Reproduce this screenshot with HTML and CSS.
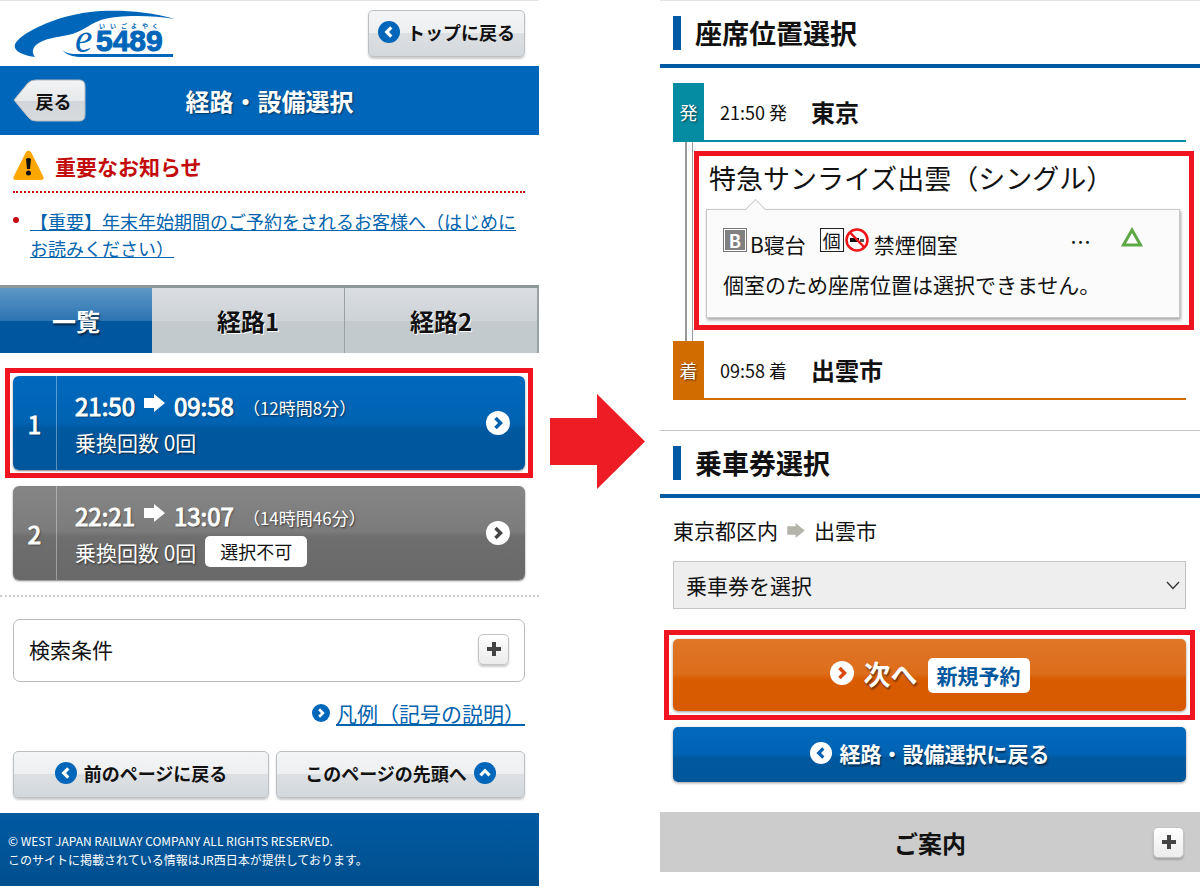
FILE: index.html
```html
<!DOCTYPE html>
<html lang="ja">
<head>
  <meta charset="UTF-8" />
  <meta name="viewport" content="width=device-width, initial-scale=1.0" />
  <title>e5489 経路・設備選択</title>
  <link rel="stylesheet" href="styles.css">
</head>
<body>
  <!-- shared icons -->
  <svg class="sprite" aria-hidden="true">
    <symbol id="circle-right" viewBox="0 0 24 24">
      <circle cx="12" cy="12" r="12" fill="currentColor" />
      <path class="chevron" d="M9.500 7l5 5-5 5" />
    </symbol>
    <symbol id="circle-left" viewBox="0 0 24 24">
      <circle cx="12" cy="12" r="12" fill="currentColor" />
      <path class="chevron" d="M14.500 7l-5 5 5 5" />
    </symbol>
    <symbol id="circle-up" viewBox="0 0 24 24">
      <circle cx="12" cy="12" r="12" fill="currentColor" />
      <path class="chevron" d="M7 14.500l5-5 5 5" />
    </symbol>
    <symbol id="arrow" viewBox="0 0 21 18">
      <path d="M0 4h10V0l11 9-11 9v-4H0z" fill="currentColor" />
    </symbol>
    <symbol id="plus" viewBox="0 0 14 14">
      <path d="M5 0h4v5h5v4H9v5H5V9H0V5h5z" fill="currentColor" />
    </symbol>
  </svg>

  <main class="steps">
    <section class="screen">
      <header class="site-header">
        <a href="#" class="logo" aria-label="e5489">
          <svg width="164" height="50" viewBox="12 6 164 50">
            <path d="M174 16C150 9 124 7 100 8 66 10 38 22 23 32 15 38 13 41 14 45 16 50 26 53 34 54 31 50 31 46 35 42 43 35 58 34 67 32 82 29 86 22 100 17 116 12 150 12 174 16z" fill="#0066b9" />
            <path d="M61 47C66 51 71 51 77 51H172V54H82C73 54 67 53 61 47z" fill="#0066b9" />
            <text class="logo-ruby" x="98 109 120 130 141 151" y="25">いいごよやく</text>
            <text class="logo-e" x="74" y="49">e</text>
            <text class="logo-num" x="95" y="48">5489</text>
          </svg>
        </a>
        <button type="button" class="btn btn-light btn-top"><svg class="icon-md" aria-hidden="true"><use href="#circle-left" /></svg>トップに戻る</button>
      </header>

      <div class="title-bar">
        <button type="button" class="back-tag">
          <svg width="73" height="43" viewBox="0 0 73 43" aria-hidden="true">
            <defs>
              <linearGradient id="tagFill" x1="0" y1="0" x2="0" y2="1">
                <stop offset="0" stop-color="#f3f4f5" />
                <stop offset="0.5" stop-color="#e6e8ea" />
                <stop offset="0.5" stop-color="#d2d6da" />
                <stop offset="1" stop-color="#d8dadd" />
              </linearGradient>
            </defs>
            <path d="M23 1H66Q72 1 72 7V36Q72 42 66 42H23Q18 42 15 38L1 21 15 4Q18 1 23 1z" fill="url(#tagFill)" stroke="#b5bcc3" />
          </svg>
          <span>戻る</span>
        </button>
        <h1>経路・設備選択</h1>
      </div>

      <div class="notice">
        <h2>
          <svg width="31" height="31" viewBox="0 0 31 31" aria-hidden="true">
            <path d="M13 2Q15.500-1 18 2L30 26Q32 30 28 30H3Q-1 30 1 26z" fill="#fba700" />
            <path d="M13 9Q15.500 7 18 9L17 19H14z" fill="#111" />
            <circle cx="15.500" cy="23" r="2.500" fill="#111" />
          </svg>
          重要なお知らせ
        </h2>
        <ul>
          <li><a href="#">【重要】年末年始期間のご予約をされるお客様へ（はじめにお読みください）</a></li>
        </ul>
      </div>

      <nav class="tabs">
        <button type="button" class="tab tab-list active">一覧</button>
        <button type="button" class="tab">経路1</button>
        <button type="button" class="tab">経路2</button>
      </nav>

      <div class="results">
        <div class="highlight">
          <a href="#" class="route-card">
            <span class="route-no">1</span>
            <span class="route-body">
              <span class="route-line">
                <strong>21:50</strong>
                <svg class="icon-arrow" aria-hidden="true"><use href="#arrow" /></svg>
                <strong>09:58</strong>
                <span class="duration">（12時間8分）</span>
              </span>
              <span class="route-line">乗換回数 0回</span>
            </span>
            <svg class="icon-lg" aria-hidden="true"><use href="#circle-right" /></svg>
          </a>
        </div>
        <a href="#" class="route-card disabled">
          <span class="route-no">2</span>
          <span class="route-body">
            <span class="route-line">
              <strong>22:21</strong>
              <svg class="icon-arrow" aria-hidden="true"><use href="#arrow" /></svg>
              <strong>13:07</strong>
              <span class="duration">（14時間46分）</span>
            </span>
            <span class="route-line">乗換回数 0回 <span class="badge">選択不可</span></span>
          </span>
          <svg class="icon-lg" aria-hidden="true"><use href="#circle-right" /></svg>
        </a>
      </div>

      <div class="tools">
        <div class="conditions">
          <span>検索条件</span>
          <button type="button" class="btn-plus" aria-label="検索条件を開く"><svg class="icon-plus" aria-hidden="true"><use href="#plus" /></svg></button>
        </div>
        <p class="legend">
          <svg class="icon-sm" aria-hidden="true"><use href="#circle-right" /></svg>
          <a href="#">凡例（記号の説明）</a>
        </p>
        <div class="page-buttons">
          <button type="button" class="btn btn-light"><svg class="icon-md" aria-hidden="true"><use href="#circle-left" /></svg>前のページに戻る</button>
          <button type="button" class="btn btn-light">このページの先頭へ<svg class="icon-md" aria-hidden="true"><use href="#circle-up" /></svg></button>
        </div>
      </div>

      <footer class="site-footer">
        <p>© WEST JAPAN RAILWAY COMPANY ALL RIGHTS RESERVED.</p>
        <p>このサイトに掲載されている情報はJR西日本が提供しております。</p>
      </footer>
    </section>

    <div class="next-step">
      <svg width="95" height="95" viewBox="0 0 95 95" aria-hidden="true">
        <path d="M0 24h47V0l48 47.500L47 95V71H0z" fill="#ee1c25" />
      </svg>
    </div>

    <section class="screen">
      <h2 class="section-title">座席位置選択</h2>

      <div class="itinerary">
        <div class="stop depart">
          <span class="stop-tag">発</span>
          <span class="stop-time">21:50 発</span>
          <strong>東京</strong>
        </div>
        <div class="leg">
          <div class="track"></div>
          <div class="train">
            <h3>特急サンライズ出雲（シングル）</h3>
            <div class="balloon">
              <div class="seat-row">
                <span class="mark mark-b">B</span>
                <span class="seat-name">B寝台</span>
                <span class="mark mark-room">個</span>
                <svg class="mark-smoke" viewBox="0 0 24 24" aria-hidden="true">
                  <path d="M5 10h9v4H5z" fill="#111" />
                  <path d="M15 11h4v3h-4z" fill="#555" />
                  <circle cx="12" cy="12" r="10.500" fill="none" stroke="#f01418" stroke-width="2.500" />
                  <path d="M5 4.500l14.500 15" stroke="#f01418" stroke-width="2.500" />
                </svg>
                <span>禁煙個室</span>
                <span class="dots">…</span>
                <svg class="vacancy" viewBox="0 0 22 20" aria-hidden="true">
                  <path d="M11 3l8.500 15H2.500z" fill="none" stroke="#5fa945" stroke-width="3" />
                </svg>
              </div>
              <p>個室のため座席位置は選択できません。</p>
            </div>
          </div>
        </div>
        <div class="stop arrive">
          <span class="stop-tag">着</span>
          <span class="stop-time">09:58 着</span>
          <strong>出雲市</strong>
        </div>
      </div>

      <h2 class="section-title">乗車券選択</h2>

      <form class="ticket">
        <label for="ticket">
          東京都区内
          <svg class="icon-arrow-sm" aria-hidden="true"><use href="#arrow" /></svg>
          出雲市
        </label>
        <div class="select-box">
          <select id="ticket" name="ticket">
            <option>乗車券を選択</option>
          </select>
          <svg width="14" height="9" viewBox="0 0 14 9" aria-hidden="true">
            <path d="M1 1l6 6.500L13 1" fill="none" stroke="#333" stroke-width="1.300" />
          </svg>
        </div>
        <div class="highlight highlight-next">
          <button type="button" class="btn btn-next">
            <svg class="icon-lg" aria-hidden="true"><use href="#circle-right" /></svg>
            次へ
            <span class="badge badge-new">新規予約</span>
          </button>
        </div>
        <button type="button" class="btn btn-return">
          <svg class="icon-md" aria-hidden="true"><use href="#circle-left" /></svg>
          経路・設備選択に戻る
        </button>
      </form>

      <div class="guide">
        <h2>ご案内</h2>
        <button type="button" class="btn-plus" aria-label="ご案内を開く"><svg class="icon-plus" aria-hidden="true"><use href="#plus" /></svg></button>
      </div>
    </section>
  </main>
</body>
</html>
```
FILE: styles.css
```css
:root {
  --blue: #0066b9;
  --blue-dark: #00589f;
  --link: #0063ad;
  --red: #c30d0d;
  --mark-red: #f01420;
  --teal: #058ca3;
  --orange: #d16d00;
  --text: #111;
  --left: 13px;
  --right: 14px;
}

* {
  margin: 0;
  padding: 0;
  box-sizing: border-box;
}

body {
  font-family: "Noto Sans CJK JP", "Noto Sans", sans-serif;
  font-size: 21px;
  color: var(--text);
  background: #fff;
}

button, select {
  font-family: inherit;
  color: inherit;
  cursor: pointer;
}

svg {
  display: block;
  flex: none;
}

.sprite {
  position: absolute;
  width: 0;
  height: 0;
}

.chevron {
  fill: none;
  stroke: var(--chevron, #fff);
  stroke-width: 3.5;
}

.icon-sm {
  width: 18px;
  height: 18px;
  color: var(--blue);
}

.icon-md {
  width: 22px;
  height: 22px;
  color: var(--blue);
}

.icon-lg {
  width: 24px;
  height: 24px;
}

.icon-plus {
  width: 14px;
  height: 14px;
  color: #444;
}

.steps {
  display: grid;
  grid-template-columns: 539fr 121fr 540fr;
  align-items: start;
}

.screen {
  border-top: 1px solid #e4e4e4;
}

.next-step {
  display: flex;
  justify-content: center;
  align-self: center;
  padding: 0 5px 4px 0;
}

.highlight {
  outline: 5px solid var(--mark-red);
  outline-offset: 3px;
}

/* buttons */
.btn {
  display: flex;
  align-items: center;
  justify-content: center;
  border: none;
  border-radius: 5px;
  font-weight: bold;
}

.btn-light {
  gap: 7px;
  height: 47px;
  padding-bottom: 4px;
  border: 1px solid #bcc0c2;
  font-size: 18px;
  background: linear-gradient(#f3f4f5, #edeff0 50%, #dde0e3 50%, #d3d8dc);
  box-shadow: 0 2px 2px rgba(0, 0, 0, 0.2);
}

.btn-plus {
  display: flex;
  align-items: center;
  justify-content: center;
  width: 31px;
  height: 31px;
  border: 1px solid #c4c4c4;
  border-radius: 5px;
  background: linear-gradient(#fff, #ececec);
  box-shadow: 0 2px 2px rgba(0, 0, 0, 0.2);
}

/* header */
.site-header {
  display: flex;
  align-items: center;
  justify-content: space-between;
  height: 65px;
  padding: 0 var(--right) 0 var(--left);
}

.logo-ruby {
  font-size: 6px;
  font-weight: bold;
  fill: var(--blue);
}

.logo-e {
  font: italic 39px "Liberation Serif", serif;
  fill: var(--blue);
}

.logo-num {
  font: bold 30px "Liberation Sans", sans-serif;
  fill: var(--blue);
  stroke: var(--blue);
}

.btn-top {
  width: 157px;
}

.title-bar {
  display: grid;
  grid-template-columns: 1fr auto 1fr;
  align-items: center;
  height: 69px;
  padding: 0 var(--left);
  background: var(--blue);
}

.title-bar h1 {
  font-size: 24px;
  line-height: 36px;
  color: #fff;
  text-shadow: 1px 1px 2px rgba(0, 0, 0, 0.5);
}

.back-tag {
  display: grid;
  justify-self: start;
  align-items: center;
  border: none;
  background: none;
  font-size: 18px;
  font-weight: bold;
}

.back-tag svg,
.back-tag span {
  grid-area: 1 / 1;
}

.back-tag span {
  padding-left: 8px;
}

/* notice */
.notice {
  padding: 15px var(--right) 23px var(--left);
}

.notice h2 {
  display: flex;
  align-items: center;
  gap: 11px;
  height: 43px;
  padding-bottom: 10px;
  border-bottom: 2px dotted var(--red);
  font-size: 21px;
  color: var(--red);
}

.notice ul {
  padding-top: 15px;
  list-style: none;
}

.notice li {
  display: flex;
  gap: 11px;
  font-size: 18px;
  line-height: 27px;
}

.notice li::before {
  content: "";
  flex: none;
  width: 6px;
  height: 6px;
  margin-top: 9px;
  border-radius: 50%;
  background: var(--red);
}

a {
  color: var(--link);
}

/* tabs */
.tabs {
  display: flex;
  height: 68px;
  border-top: 3px solid #8d9699;
  border-right: 2px solid #9aa1a4;
}

.tab {
  flex: 193;
  border: none;
  border-left: 1px solid #9aa1a4;
  font-size: 24px;
  font-weight: bold;
  text-shadow: 1px 1px 0 #fff;
  background: linear-gradient(#dadde2, #ced3d7 50%, #c3cacd 50%, #c3cacd);
}

.tab-list {
  flex: 153;
}

.tab.active {
  border-left: none;
  color: #fff;
  text-shadow: 1px 2px 2px rgba(0, 0, 0, 0.6);
  background: linear-gradient(#5e98c6, #2c74b2 50%, #00579f 50%, #00579f);
}

.tab.active + .tab {
  border-left: none;
}

/* search results */
.results {
  display: grid;
  gap: 16px;
  padding: 23px var(--right) 15px var(--left);
  border-bottom: 2px dotted #ccc;
}

.route-card {
  display: flex;
  align-items: center;
  height: 94px;
  padding-right: 15px;
  border-radius: 6px;
  color: #fff;
  text-decoration: none;
  text-shadow: 1px 1px 2px rgba(0, 0, 0, 0.6);
  background: linear-gradient(#0069bd, #0062b1 50%, #00589f 56%, #00569b);
  box-shadow: 0 1px 2px rgba(0, 0, 0, 0.5);
  --chevron: #0060ad;
}

.route-card.disabled {
  background: linear-gradient(#858585, #7c7c7c 48%, #6e6e6e 54%, #696969);
  --chevron: #444;
}

.route-no {
  display: flex;
  align-items: center;
  justify-content: center;
  align-self: stretch;
  width: 44px;
  border-right: 1px solid rgba(255, 255, 255, 0.35);
}

.route-no,
.route-line strong {
  font-size: 24px;
  font-weight: normal;
  -webkit-text-stroke: 1px #fff;
}

.route-body {
  flex: 1;
  padding: 1px 0 0 18px;
}

.route-line {
  display: flex;
  align-items: center;
  gap: 9px;
  height: 36px;
}

.icon-arrow {
  width: 21px;
  height: 18px;
  margin-bottom: 6px;
}

.duration {
  padding-top: 4px;
  font-size: 17px;
}

.badge {
  padding: 0 15px;
  border-radius: 5px;
  font-size: 18px;
  line-height: 31px;
  color: var(--text);
  text-shadow: none;
  background: #fff;
}

/* conditions and page buttons */
.tools {
  padding: 22px var(--right) 15px var(--left);
}

.conditions {
  display: flex;
  align-items: center;
  justify-content: space-between;
  height: 63px;
  padding: 0 15px 3px;
  border: 1px solid #bbb;
  border-radius: 7px;
}

.legend {
  display: flex;
  align-items: center;
  justify-content: flex-end;
  gap: 6px;
  height: 32px;
  margin: 15px 0 22px;
}

.page-buttons {
  display: flex;
  gap: 7px;
}

.page-buttons .btn {
  flex: 249;
}

.page-buttons .btn:first-child {
  flex: 256;
}

.site-footer {
  padding: 18px 8px 17px;
  font-size: 12px;
  line-height: 19px;
  color: #fff;
  background: linear-gradient(#005aa2, #004f8d);
}

/* section headings */
.section-title {
  display: flex;
  align-items: center;
  gap: 14px;
  padding: 14px var(--left);
  border-bottom: 4px solid #0059a5;
  font-size: 27px;
  line-height: 35px;
}

.section-title::before {
  content: "";
  width: 8px;
  height: 34px;
  background: #0059a5;
}

/* itinerary */
.itinerary {
  padding: 15px var(--right) 30px var(--left);
  border-bottom: 1px solid #c4c4c4;
}

.stop {
  display: flex;
  align-items: center;
  height: 59px;
}

.depart {
  border-bottom: 2px solid var(--teal);
}

.arrive {
  border-bottom: 2px solid var(--orange);
}

.stop-tag {
  display: flex;
  align-items: center;
  justify-content: center;
  align-self: stretch;
  width: 31px;
  font-size: 18px;
  color: #fff;
  text-shadow: 1px 1px 2px rgba(0, 0, 0, 0.6);
}

.depart .stop-tag {
  background: var(--teal);
}

.arrive .stop-tag {
  background: var(--orange);
}

.stop-time {
  padding: 0 24px 0 16px;
  font-size: 18px;
}

.stop strong {
  font-size: 24px;
}

.leg {
  display: flex;
}

.track {
  width: 8px;
  margin-left: 12px;
  border: solid #999;
  border-width: 0 1px 0 2px;
}

.train {
  flex: 1;
  margin: 9px -8px 11px 1px;
  padding: 2px 9px 7px 7px;
  border: 5px solid var(--mark-red);
}

.train h3 {
  padding-left: 3px;
  font-size: 27px;
  font-weight: normal;
  line-height: 40px;
}

.balloon {
  position: relative;
  margin-top: 11px;
  padding: 14px 16px 13px;
  border: 1px solid #c8c8c8;
  background: #fbfbfb;
  box-shadow: 1px 2px 3px rgba(0, 0, 0, 0.35);
  line-height: 40px;
}

/* pointer on the top edge of the balloon */
.balloon::before {
  content: "";
  position: absolute;
  top: -8px;
  left: 41px;
  width: 14px;
  height: 14px;
  border: solid #c8c8c8;
  border-width: 1px 0 0 1px;
  background: #fbfbfb;
  transform: rotate(45deg);
}

.seat-row {
  display: flex;
  align-items: center;
  height: 40px;
}

.mark {
  width: 24px;
  height: 24px;
  margin-bottom: 8px;
  text-align: center;
  line-height: 22px;
}

.mark-b {
  border: 1px solid #777;
  outline: 1px solid #fff;
  outline-offset: -2px;
  font-size: 18px;
  font-weight: bold;
  color: #fff;
  background: #808080;
}

.mark-room {
  border: 1px solid #222;
  font-size: 18px;
}

.mark-smoke {
  width: 24px;
  height: 24px;
  margin: 0 5px 8px 1px;
}

.seat-name {
  padding: 0 14px 0 3px;
}

.dots {
  margin: 0 30px 6px auto;
}

.vacancy {
  width: 22px;
  height: 20px;
  margin: 0 20px 14px 0;
}

/* ticket form */
.ticket {
  padding: 17px var(--right) 30px var(--left);
}

.ticket label {
  display: flex;
  align-items: center;
  gap: 9px;
  height: 32px;
  padding-bottom: 2px;
}

.icon-arrow-sm {
  width: 18px;
  height: 15px;
  color: #b4b4aa;
}

.select-box {
  display: grid;
  align-items: center;
  margin-top: 14px;
}

.select-box select,
.select-box svg {
  grid-area: 1 / 1;
}

.select-box select {
  appearance: none;
  width: 100%;
  height: 48px;
  padding: 0 12px;
  border: 1px solid #c4c4c4;
  border-radius: 0;
  font-size: 21px;
  background: #eee;
}

.select-box svg {
  justify-self: end;
  margin-right: 6px;
  pointer-events: none;
}

.highlight-next {
  margin: 30px 0 16px;
  outline-offset: 4px;
}

.btn-next,
.btn-return {
  width: 100%;
  padding-bottom: 4px;
  color: #fff;
  text-shadow: 1px 2px 2px rgba(0, 0, 0, 0.5);
  box-shadow: 0 1px 3px rgba(0, 0, 0, 0.4);
}

.btn-next {
  gap: 10px;
  height: 72px;
  font-size: 27px;
  background: linear-gradient(#e07628, #dd6d1a 48%, #d95c00 56%, #d85900);
  --chevron: #d8480f;
}

.badge-new {
  margin-top: 4px;
  padding: 0 9px;
  font-size: 21px;
  line-height: 35px;
  color: var(--blue-dark);
}

.btn-return {
  gap: 8px;
  height: 55px;
  font-size: 21px;
  background: linear-gradient(#0069bd, #0063b3 48%, #00599f 56%, #005699);
  --chevron: #0060ad;
}

.btn-return .icon-md {
  color: #fff;
}

.guide {
  display: grid;
  grid-template-columns: 1fr auto 1fr;
  align-items: center;
  height: 60px;
  padding: 0 16px;
  background: #ccc;
}

.guide h2 {
  grid-column: 2;
  font-size: 24px;
}

.guide .btn-plus {
  justify-self: end;
}
```
